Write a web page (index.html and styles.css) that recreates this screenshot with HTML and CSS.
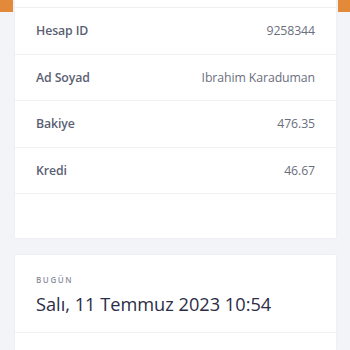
FILE: index.html
```html
<!DOCTYPE html>
<html lang="tr">
<head>
<meta charset="utf-8">
<link rel="stylesheet" href="styles.css">
</head>
<body>
<div class="page">
  <div class="gutter gutter-left"><div class="corner"></div></div>
  <main class="main">
    <section class="card info">
      <div class="row"><span class="label">Hesap ID</span><span class="value">9258344</span></div>
      <div class="row"><span class="label">Ad Soyad</span><span class="value">Ibrahim Karaduman</span></div>
      <div class="row"><span class="label">Bakiye</span><span class="value">476.35</span></div>
      <div class="row"><span class="label">Kredi</span><span class="value">46.67</span></div>
      <div class="row row-empty"></div>
    </section>
    <section class="card today">
      <div class="today-head">
        <div class="eyebrow">BUGÜN</div>
        <div class="date">Salı, 11 Temmuz 2023 10:54</div>
      </div>
      <div class="today-body"></div>
    </section>
  </main>
  <div class="gutter gutter-right"><div class="corner"></div></div>
</div>
</body>
</html>
```
FILE: styles.css
```css
* { box-sizing: border-box; }
html, body { margin: 0; padding: 0; }
body {
  background: #f3f4f8;
  font-family: "Open Sans", "Liberation Sans", sans-serif;
  height: 350px;
  overflow: hidden;
}
.page {
  display: flex;
  align-items: flex-start;
}
.gutter { width: 15px; flex: none; display: flex; }
.gutter-right { width: 14px; justify-content: flex-end; }
.corner {
  width: 13px;
  height: 12px;
  background: #e38a3a;
}
.gutter-right .corner { width: 12px; }
.main {
  flex: 1;
  display: flex;
  flex-direction: column;
  gap: 17px;
}
.card {
  background: #ffffff;
  box-shadow: 0 0 2px rgba(40, 50, 90, 0.06);
}
.info { padding-top: 7px; height: 238px; }
.row {
  display: flex;
  justify-content: space-between;
  align-items: center;
  height: 46.5px;
  padding: 0 21px;
  border-top: 1px solid #eef0f4;
  font-size: 12.3px;
  letter-spacing: -0.1px;
}
.label { font-weight: 600; color: #5a5f73; }
.value { color: #6b6f7e; }
.today { height: 95px; }
.today-head {
  padding: 19px 21px 15px;
  border-bottom: 1px solid #eef0f4;
}
.eyebrow {
  font-size: 8px;
  letter-spacing: 1.6px;
  color: #8e909e;
  line-height: 11px;
  font-weight: 600;
}
.date {
  font-size: 18.2px;
  line-height: 26px;
  color: #2b2c47;
  margin-top: 6px;
}
```
